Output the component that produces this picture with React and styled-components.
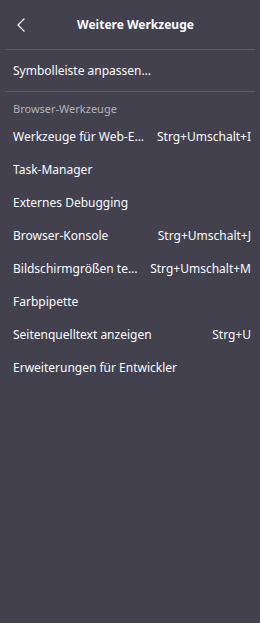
import React from 'react';
import styled, { createGlobalStyle } from 'styled-components';

const GlobalStyle = createGlobalStyle`
  html, body {
    margin: 0;
    padding: 0;
    background: #42414d;
  }
  body {
    font-family: "Noto Sans", "DejaVu Sans", sans-serif;
    -webkit-font-smoothing: antialiased;
  }
`;

const Panel = styled.div`
  width: 260px;
  height: 623px;
  background: #42414d;
  color: #fbfbfe;
  display: flex;
  flex-direction: column;
  overflow: hidden;
`;

const Header = styled.div`
  height: 49px;
  display: flex;
  align-items: center;
  padding: 0 8px;
  box-sizing: border-box;
`;

const BackButton = styled.button`
  width: 28px;
  height: 28px;
  border: none;
  background: none;
  color: #fbfbfe;
  display: flex;
  align-items: center;
  justify-content: center;
  padding: 0;
  cursor: pointer;
`;

const Title = styled.h1`
  flex: 1;
  margin: 0 17px 0 0;
  text-align: center;
  font-size: 12px;
  font-weight: 700;
`;

const Separator = styled.hr`
  border: none;
  border-top: 1px solid #5b5a64;
  margin: 0 5px;
  height: 0;
`;

const Section = styled.div`
  padding: 4px 0;
  display: flex;
  flex-direction: column;
`;

const SectionLabel = styled.div`
  height: 24px;
  display: flex;
  align-items: center;
  padding: 0 13px;
  font-size: 11px;
  color: #b4b3bb;
`;

const Row = styled.div`
  height: 33px;
  display: flex;
  align-items: center;
  padding: 0 9px 0 13px;
  font-size: 12px;
  cursor: default;
  &:hover {
    background: #52525e;
  }
`;

const Label = styled.span`
  flex: 1;
  min-width: 0;
  white-space: nowrap;
  overflow: hidden;
  text-overflow: ellipsis;
`;

const Shortcut = styled.span`
  margin-left: 12px;
  white-space: nowrap;
  flex-shrink: 0;
`;

const tools = [
  { label: 'Werkzeuge für Web-Entwickler', shortcut: 'Strg+Umschalt+I' },
  { label: 'Task-Manager' },
  { label: 'Externes Debugging' },
  { label: 'Browser-Konsole', shortcut: 'Strg+Umschalt+J' },
  { label: 'Bildschirmgrößen testen', shortcut: 'Strg+Umschalt+M' },
  { label: 'Farbpipette' },
  { label: 'Seitenquelltext anzeigen', shortcut: 'Strg+U' },
  { label: 'Erweiterungen für Entwickler' },
];

const Chevron = () => (
  <svg width="16" height="16" viewBox="0 0 16 16" fill="none">
    <path d="M10 2 4 8l6 6" stroke="currentColor" strokeWidth="1.3" strokeLinecap="round" strokeLinejoin="round" />
  </svg>
);

const App = () => (
  <>
    <GlobalStyle />
    <Panel>
      <Header>
        <BackButton aria-label="Zurück">
          <Chevron />
        </BackButton>
        <Title>Weitere Werkzeuge</Title>
      </Header>
      <Separator />
      <Section>
        <Row>
          <Label>Symbolleiste anpassen…</Label>
        </Row>
      </Section>
      <Separator />
      <Section>
        <SectionLabel>Browser-Werkzeuge</SectionLabel>
        {tools.map((t) => (
          <Row key={t.label}>
            <Label>{t.label}</Label>
            {t.shortcut && <Shortcut>{t.shortcut}</Shortcut>}
          </Row>
        ))}
      </Section>
    </Panel>
  </>
);

export default App;
